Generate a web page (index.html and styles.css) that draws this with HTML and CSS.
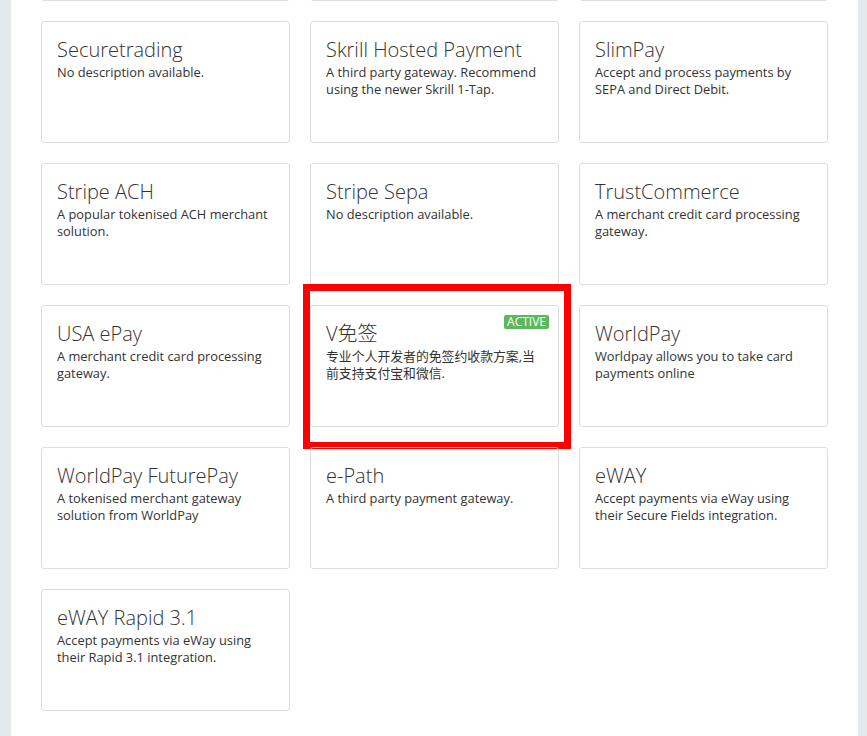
FILE: index.html
```html
<!DOCTYPE html>
<html lang="en">
<head>
<meta charset="utf-8">
<title>Payment Gateways</title>
<link rel="stylesheet" href="styles.css">
</head>
<body>
<div class="page">
  <div class="grid">
    <div class="card"></div>
    <div class="card"></div>
    <div class="card"></div>

    <div class="card"><h4 class="title">Securetrading</h4><p class="desc">No description available.</p></div>
    <div class="card"><h4 class="title">Skrill Hosted Payment</h4><p class="desc">A third party gateway. Recommend using the newer Skrill 1-Tap.</p></div>
    <div class="card"><h4 class="title">SlimPay</h4><p class="desc">Accept and process payments by SEPA and Direct Debit.</p></div>

    <div class="card"><h4 class="title">Stripe ACH</h4><p class="desc">A popular tokenised ACH merchant solution.</p></div>
    <div class="card"><h4 class="title">Stripe Sepa</h4><p class="desc">No description available.</p></div>
    <div class="card"><h4 class="title">TrustCommerce</h4><p class="desc">A merchant credit card processing gateway.</p></div>

    <div class="card"><h4 class="title">USA ePay</h4><p class="desc">A merchant credit card processing gateway.</p></div>
    <div class="card card-active">
      <span class="badge">ACTIVE</span>
      <h4 class="title">V免签</h4>
      <p class="desc">专业个人开发者的免签约收款方案,当前支持支付宝和微信.</p>
      <div class="highlight"></div>
    </div>
    <div class="card"><h4 class="title">WorldPay</h4><p class="desc">Worldpay allows you to take card payments online</p></div>

    <div class="card"><h4 class="title">WorldPay FuturePay</h4><p class="desc">A tokenised merchant gateway solution from WorldPay</p></div>
    <div class="card"><h4 class="title">e-Path</h4><p class="desc">A third party payment gateway.</p></div>
    <div class="card"><h4 class="title">eWAY</h4><p class="desc">Accept payments via eWay using their Secure Fields integration.</p></div>

    <div class="card"><h4 class="title">eWAY Rapid 3.1</h4><p class="desc">Accept payments via eWay using their Rapid 3.1 integration.</p></div>
  </div>
</div>
</body>
</html>
```
FILE: styles.css
```css
html, body {
  margin: 0;
  padding: 0;
  height: 100%;
}
body {
  background: #e3e8eb;
  font-family: "Open Sans", "Noto Sans CJK SC", sans-serif;
  color: #333;
  overflow: hidden;
}
.page {
  background: #fff;
  margin: 0 9px 0 11px;
  height: 736px;
  overflow: hidden;
}
.grid {
  display: grid;
  grid-template-columns: repeat(3, 249px);
  grid-auto-rows: 122px;
  gap: 20px;
  padding: 0 30px;
  margin-top: -121px;
}
.card {
  position: relative;
  box-sizing: border-box;
  border: 1px solid #ddd;
  border-radius: 3px;
  padding: 17px 15px 15px;
}
.title {
  margin: 0;
  font-size: 20px;
  line-height: 22px;
  font-weight: 300;
  color: #333;
}
.desc {
  margin: 3px 0 0;
  font-size: 12.85px;
  line-height: 17px;
  color: #333;
}
.badge {
  position: absolute;
  top: 9px;
  right: 9px;
  background: #5cb85c;
  color: #fff;
  font-size: 12px;
  line-height: 14px;
  padding: 0 3px;
  border-radius: 2px;
}
.highlight {
  position: absolute;
  left: -8px;
  top: -22px;
  width: 268px;
  height: 165px;
  box-sizing: border-box;
  border: 7px solid #ff0000;
  pointer-events: none;
}
```
